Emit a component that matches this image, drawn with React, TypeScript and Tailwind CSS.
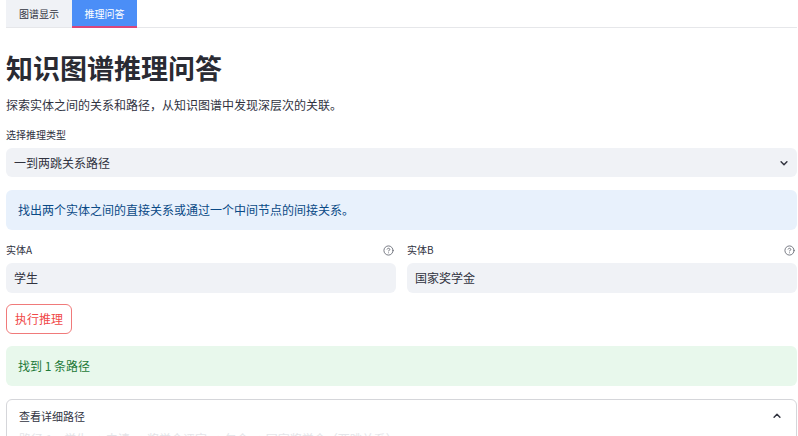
import React from 'react';

const font = { fontFamily: '"Noto Sans CJK SC", "Noto Sans", sans-serif' };

function HelpIcon() {
  return (
    <svg width="11" height="11" viewBox="0 0 24 24" fill="none" stroke="#6b6e78" strokeWidth="2" strokeLinecap="round" strokeLinejoin="round">
      <circle cx="12" cy="12" r="10" />
      <path d="M9.1 9a3 3 0 0 1 5.8 1c0 2-3 3-3 3" />
      <path d="M12 17h.01" />
    </svg>
  );
}

function Chevron({ up = false }: { up?: boolean }) {
  return (
    <svg width="10" height="10" viewBox="0 0 24 24" fill="none" stroke="#31333f" strokeWidth="3.5" strokeLinecap="round" strokeLinejoin="round">
      {up ? <path d="M5 15l7-7 7 7" /> : <path d="M5 9l7 7 7-7" />}
    </svg>
  );
}

export default function App() {
  return (
    <div className="w-[798px] h-[436px] overflow-hidden bg-white text-[#31333f] pl-[6px] pr-[1px]" style={font}>
      {/* Tabs */}
      <div className="flex h-[28px] border-b border-[#e6e7ea]">
        <div className="w-[66px] h-[27px] flex items-center justify-center bg-[#f0f2f6] text-[10px] text-[#31333f]">图谱显示</div>
        <div className="w-[65px] h-[28px] flex items-center justify-center bg-[#4b8ef7] text-[10px] text-white border-b-2 border-[#d9467a]">推理问答</div>
      </div>

      <h1 className="mt-[22px] text-[27px] leading-[36px] font-bold text-[#2a2b33]">知识图谱推理问答</h1>
      <p className="mt-[10px] text-[12px] leading-[18px]">探索实体之间的关系和路径，从知识图谱中发现深层次的关联。</p>

      <div className="mt-[14px] text-[10px] leading-[14px]">选择推理类型</div>
      <div className="mt-[6px] h-[29px] rounded-md bg-[#f0f2f6] flex items-center justify-between pl-[8px] pr-[8px]">
        <span className="text-[12px]">一到两跳关系路径</span>
        <Chevron />
      </div>

      <div className="mt-[13px] h-[40px] rounded-md bg-[#e8f1fc] flex items-center pl-[12px] text-[12px] text-[#0a4a86]">
        找出两个实体之间的直接关系或通过一个中间节点的间接关系。
      </div>

      <div className="mt-[13px] grid grid-cols-2 gap-[11px]">
        {[
          { label: '实体A', value: '学生' },
          { label: '实体B', value: '国家奖学金' },
        ].map((f) => (
          <div key={f.label}>
            <div className="flex items-center justify-between h-[14px] pr-[2px]">
              <span className="text-[10px] leading-[14px]">{f.label}</span>
              <HelpIcon />
            </div>
            <div className="mt-[6px] h-[30px] rounded-md bg-[#f0f2f6] flex items-center pl-[8px] text-[12px]">{f.value}</div>
          </div>
        ))}
      </div>

      <button className="mt-[11px] h-[30px] w-[66px] rounded-md border border-[#f07a7a] text-[12px] text-[#f04848] flex items-center justify-center bg-white">
        执行推理
      </button>

      <div className="mt-[12px] h-[40px] rounded-md bg-[#e8f8ec] flex items-center pl-[12px] text-[12px] text-[#1d7a38]">
        找到 1 条路径
      </div>

      <div className="mt-[13px] rounded-md border border-[#d5d6da]">
        <div className="h-[32px] flex items-center justify-between pl-[12px] pr-[14px]">
          <span className="text-[11px] leading-[14px]">查看详细路径</span>
          <Chevron up />
        </div>
        <div className="pl-[12px] text-[12px] text-[#e4e5e9] leading-[14px]">
          路径 1：学生 → 申请 → 奖学金评定 → 包含 → 国家奖学金（两跳关系）
        </div>
      </div>
    </div>
  );
}
